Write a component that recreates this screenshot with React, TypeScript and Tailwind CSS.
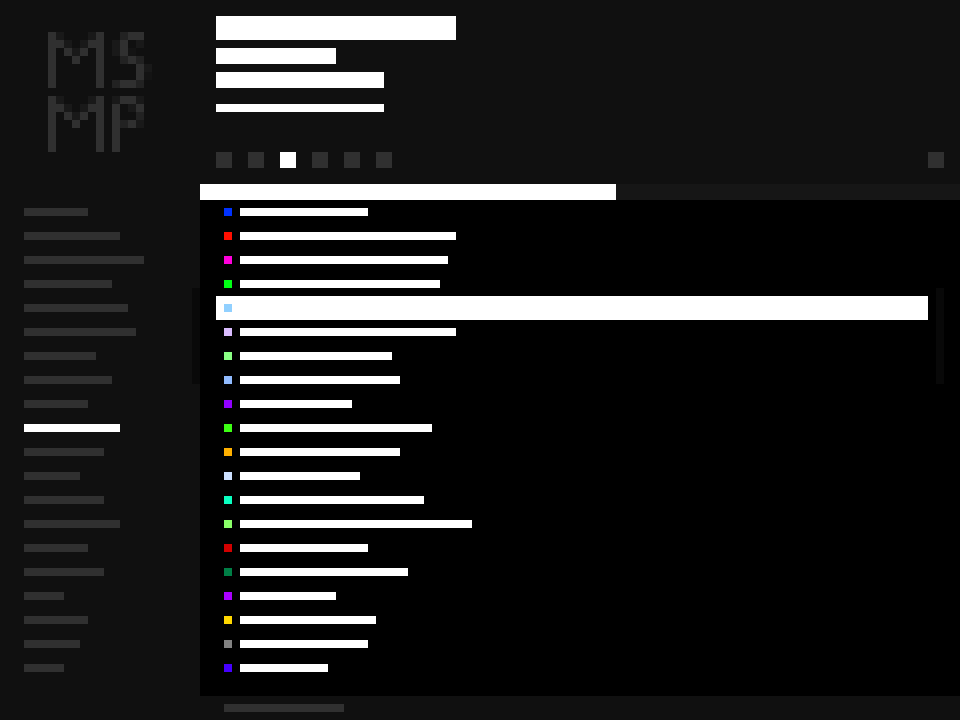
const menu = [
  "w-16", "w-24", "w-30", "w-22", "w-26", "w-28", "w-18", "w-22", "w-16", "w-24",
  "w-20", "w-14", "w-20", "w-24", "w-16", "w-20", "w-10", "w-16", "w-14", "w-10",
];
const activeMenu = 9;

const entries = [
  { color: "bg-[#0032ff]", width: "w-32" },
  { color: "bg-[#ff0f00]", width: "w-54" },
  { color: "bg-[#ff00dc]", width: "w-52" },
  { color: "bg-[#00ff14]", width: "w-50" },
  { color: "bg-[#91d0ff]", width: "w-44" },
  { color: "bg-[#dabdff]", width: "w-54" },
  { color: "bg-[#8aff84]", width: "w-38" },
  { color: "bg-[#91bbff]", width: "w-40" },
  { color: "bg-[#9100ff]", width: "w-28" },
  { color: "bg-[#3dff14]", width: "w-48" },
  { color: "bg-[#ffb000]", width: "w-40" },
  { color: "bg-[#cce0ff]", width: "w-30" },
  { color: "bg-[#0affc0]", width: "w-46" },
  { color: "bg-[#8bff69]", width: "w-58" },
  { color: "bg-[#d20000]", width: "w-32" },
  { color: "bg-[#007f46]", width: "w-42" },
  { color: "bg-[#aa00ff]", width: "w-24" },
  { color: "bg-[#ffd700]", width: "w-34" },
  { color: "bg-[#828282]", width: "w-32" },
  { color: "bg-[#4600ff]", width: "w-22" },
];
const activeEntry = 4;

// Each digit is a cell's brightness: 4 is the full stroke, 0 is empty.
const logo = [
  "4200024003440",
  "4420244024020",
  "4042404024100",
  "4004004003430",
  "4000004000042",
  "4000004000041",
  "4000004034430",
  "0000000000000",
  "4200024024420",
  "4420244040240",
  "4042404040030",
  "4004004043420",
  "4000004040000",
  "4000004040000",
  "4000004040000",
];
const shades = ["none", "#141414", "#191919", "#222222", "#303030"];

function Logo() {
  return (
    <svg className="ml-12 block h-30 w-26" viewBox="0 0 13 15" shapeRendering="crispEdges" role="img" aria-label="MSMP">
      {logo.flatMap((line, y) =>
        line.split("").map((cell, x) =>
          cell === "0" ? null : (
            <rect key={`${x}-${y}`} x={x} y={y} width="1" height="1" fill={shades[Number(cell)]} />
          ),
        ),
      )}
    </svg>
  );
}

export default function App() {
  return (
    <div className="flex min-h-screen bg-[#101010] font-['Liberation_Sans',sans-serif]">
      <aside className="flex w-50 shrink-0">
        <div className="flex-1 pt-8">
          <Logo />
          <nav className="mt-12 px-6" aria-label="Menu">
            <ul>
              {menu.map((width, i) => (
                <li key={i}>
                  <a href="#" aria-label={`Section ${i + 1}`} className="flex h-6 items-center">
                    <span className={`h-2 ${width} ${i === activeMenu ? "bg-white" : "bg-[#303030]"}`} />
                  </a>
                </li>
              ))}
            </ul>
          </nav>
        </div>
        <div className="mt-72 h-24 w-2 bg-[#090909]" />
      </aside>

      <main className="flex min-w-0 flex-1 flex-col">
        <header className="flex flex-col gap-2 px-4 pt-4">
          <div className="h-6 w-60 bg-white" />
          <div className="h-4 w-30 bg-white" />
          <div className="h-4 w-42 bg-white" />
          <div className="mt-2 h-2 w-42 bg-white" />
        </header>

        <div className="mt-10 flex items-center gap-4 px-4">
          {[0, 1, 2, 3, 4, 5].map((i) => (
            <button
              key={i}
              type="button"
              aria-label={`Tab ${i + 1}`}
              className={`size-4 ${i === 2 ? "bg-white" : "bg-[#303030]"}`}
            />
          ))}
          <button type="button" aria-label="Options" className="ml-auto size-4 bg-[#303030]" />
        </div>

        <div className="mt-4 h-4 bg-[#161616]">
          <div className="h-4 w-104 bg-white" />
        </div>

        <section className="flex flex-1 bg-black px-4 pb-4">
          <ul className="flex-1">
            {entries.map((entry, i) => (
              <li key={i}>
                <button
                  type="button"
                  aria-label={`Entry ${i + 1}`}
                  className={`flex h-6 w-full items-center gap-2 px-2 ${i === activeEntry ? "bg-white" : ""}`}
                >
                  <span className={`size-2 ${entry.color}`} />
                  <span className={`h-2 bg-white ${entry.width}`} />
                </button>
              </li>
            ))}
          </ul>
          <div className="mt-22 ml-2 h-24 w-2 bg-[#080808]" />
        </section>

        <footer className="flex h-6 items-center px-6">
          <div className="h-2 w-30 bg-[#303030]" />
        </footer>
      </main>
    </div>
  );
}
